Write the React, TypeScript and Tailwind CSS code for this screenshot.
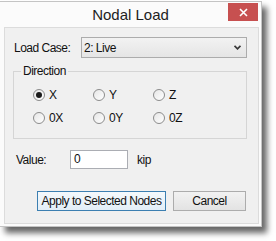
const uiFont = "font-['Liberation_Sans',Arial,sans-serif] text-[12px] tracking-[-0.5px] text-[#111]";

interface RadioProps {
    label: string;
    checked?: boolean;
}

const Radio = ({ label, checked }: RadioProps) => {
    return (
        <div className="flex items-center w-[60px] h-[16px]">
            <span className="w-[12px] h-[12px] rounded-full border border-[#8c8c8c] bg-gradient-to-br from-[#e6e6e6] to-white flex items-center justify-center">
                {checked && <span className="w-[6px] h-[6px] rounded-full bg-[#1b1b1b]" />}
            </span>
            <span className="ml-[4px] leading-none">{label}</span>
        </div>
    );
};

const App = () => {
    const rows = [
        [{ label: 'X', checked: true }, { label: 'Y' }, { label: 'Z' }],
        [{ label: '0X' }, { label: '0Y' }, { label: '0Z' }],
    ];

    return (
        <div className={`w-[276px] h-[241px] bg-white overflow-hidden pt-px ${uiFont}`}>
            <div className="w-[262px] h-[226px] flex flex-col bg-[#fbfbfb] border-t border-r border-b border-[#c4c4c4] shadow-[5px_6px_6px_rgba(0,0,0,0.6)]">
                {/* title bar */}
                <div className="h-[25px] grid grid-cols-[33px_1fr_33px] items-start">
                    <div />
                    <div className="text-center font-['Liberation_Sans',Arial,sans-serif] text-[15px] tracking-normal text-[#222] leading-[25px]">
                        Nodal Load
                    </div>
                    <button className="mt-px w-[30px] h-[18px] bg-[#c75050] flex items-center justify-center">
                        <svg width="9" height="9" viewBox="0 0 9 9">
                            <path d="M1 1L8 8M8 1L1 8" stroke="white" strokeWidth="1.6" />
                        </svg>
                    </button>
                </div>

                {/* client area */}
                <div className="ml-[4px] mr-[2px] h-[197px] bg-[#f0f0f0] border border-[#dcdcdc] flex flex-col">
                    <div className="flex items-center mt-[9px] ml-[9px]">
                        <span className="w-[67px]">Load Case:</span>
                        <div className="w-[166px] h-[21px] border border-[#acacac] bg-gradient-to-b from-[#f2f2f2] to-[#e5e5e5] flex items-center justify-between pl-[2px] pr-[5px]">
                            <span>2: Live</span>
                            <svg width="7" height="5" viewBox="0 0 7 5">
                                <path d="M0.5 0.8L3.5 3.8L6.5 0.8" stroke="#3a3a3a" strokeWidth="1.8" fill="none" />
                            </svg>
                        </div>
                    </div>

                    <fieldset className="mt-[6px] ml-[8px] w-[234px] h-[75px] border border-[#d5d5d5] px-[7px]">
                        <legend className="px-[2px] leading-[14px]">Direction</legend>
                        <div className="flex flex-col gap-[7px] pt-[9px] pl-[12px]">
                            {rows.map((row, i) => (
                                <div key={i} className="flex">
                                    {row.map((r) => (
                                        <Radio key={r.label} label={r.label} checked={r.checked} />
                                    ))}
                                </div>
                            ))}
                        </div>
                    </fieldset>

                    <div className="flex items-center mt-[11px] ml-[11px]">
                        <span className="w-[54px]">Value:</span>
                        <div className="w-[58px] h-[19px] bg-white border border-[#abadb3] pl-[3px] leading-[17px]">0</div>
                        <span className="ml-[9px]">kip</span>
                    </div>

                    <div className="flex mt-[22px] ml-[32px] gap-[7px]">
                        <button className="w-[129px] h-[20px] border border-[#3c7fb1] bg-gradient-to-b from-[#f4f9fc] to-[#e3eef7] leading-none whitespace-nowrap">
                            Apply to Selected Nodes
                        </button>
                        <button className="w-[73px] h-[20px] border border-[#acacac] bg-gradient-to-b from-[#f2f2f2] to-[#e3e3e3] leading-none">
                            Cancel
                        </button>
                    </div>
                </div>
            </div>
        </div>
    );
};

export default App;
